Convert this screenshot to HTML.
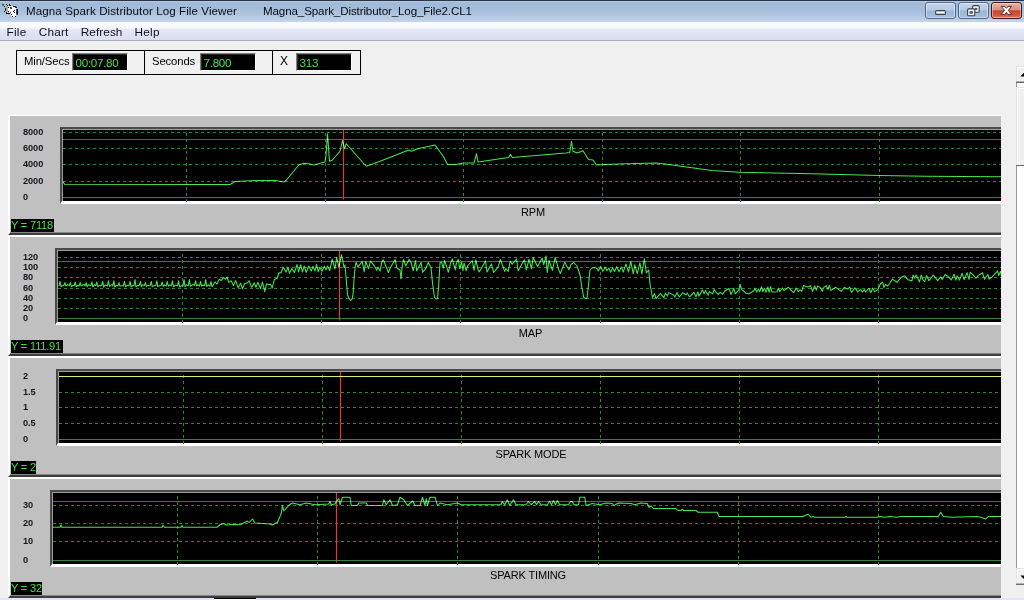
<!DOCTYPE html>
<html>
<head>
<meta charset="utf-8">
<title>Magna Spark Distributor Log File Viewer</title>
<style>
html,body{margin:0;padding:0;}
body{width:1024px;height:600px;overflow:hidden;background:#f0f0f0;font-family:"Liberation Sans",sans-serif;position:relative;}
.abs{position:absolute;}
#title{position:absolute;left:0;top:0;width:1024px;height:22px;background:linear-gradient(to bottom,#b2c6df 0px,#b2c6df 1.5px,#a1bad7 3px,#a3bcd9 9px,#b2c8e2 16px,#c2d5ea 22px);}
#title:before{content:"";position:absolute;left:0;top:0;width:100%;height:1px;background:#27344a;}
#title .t{position:absolute;top:3px;font-size:11.6px;line-height:15px;color:#0b0b12;white-space:nowrap;letter-spacing:0.08px;}
#menu{position:absolute;left:0;top:22px;width:1024px;height:18px;background:linear-gradient(to bottom,#f7f9fd 0px,#fbfcfe 3px,#f4f5fb 6px,#e3e6f4 8px,#dfe2f2 13px,#dadeef 18px);}
#menu:after{content:"";position:absolute;left:0;top:18px;width:100%;height:1px;background:#aeb0b8;}
#menu span{position:absolute;top:2.5px;font-size:11.8px;letter-spacing:0.2px;line-height:15px;color:#10101c;}
.wb svg{position:absolute;left:0;top:0;}
.wb{position:absolute;top:2px;height:15px;width:29px;overflow:hidden;border:1px solid #52688a;border-radius:3px;background:linear-gradient(to bottom,#c2d4ea 0,#b4c9e3 48%,#9ab5d6 52%,#a6bfdd 100%);box-shadow:inset 0 0 0 1px rgba(255,255,255,.45);}
.wb.close{border-color:#43161a;background:linear-gradient(to bottom,#eab2a4 0,#dd907f 45%,#c8472d 52%,#cf553c 80%,#dc7a64 100%);box-shadow:inset 0 0 0 1px rgba(255,220,210,.5);}
#info{position:absolute;left:16px;top:50px;width:343px;height:23px;border:1px solid #000;}
#info .d{position:absolute;top:0;width:1px;height:23px;background:#000;}
#info .l{position:absolute;top:4px;font-size:11.3px;letter-spacing:-0.12px;line-height:13px;color:#000;white-space:nowrap;}
#info .f{position:absolute;top:2px;width:54px;height:16px;background:#000;border:1px solid;border-color:#7c7c7c #fafafa #fafafa #7c7c7c;box-shadow:inset 1px 1px 0 #2a2a2a;}
#info .f span{position:absolute;left:2.6px;top:2px;font-size:11.6px;letter-spacing:-0.3px;line-height:13px;color:#48e048;white-space:nowrap;}
#wrap{position:absolute;left:8px;top:115px;width:993px;height:483px;overflow:hidden;}
.panel{position:absolute;left:0;width:1010px;height:121px;background:#c0c0c0;box-sizing:border-box;}
.panel:before{content:"";position:absolute;left:0;top:0;width:100%;height:121px;box-sizing:border-box;border-left:2px solid #fff;border-top:2px solid #fff;border-bottom:2px solid #3e3e3e;pointer-events:none;}
.panel:after{content:"";position:absolute;left:2px;bottom:2px;width:100%;height:1px;background:#858585;}
.chart{position:absolute;height:77px;box-sizing:border-box;background:#000;border-style:solid;border-width:2px 3px 3px 2px;border-color:#4c4c4c #fff #fff #474747;box-shadow:inset 1px 1px 0 #9a9a9a;}
.al{position:absolute;left:15px;font-size:9.2px;letter-spacing:-0.05px;line-height:13px;font-weight:bold;color:#16161a;white-space:nowrap;}
.cname{position:absolute;width:200px;text-align:center;font-size:11px;letter-spacing:-0.15px;line-height:15px;color:#000;white-space:nowrap;}
.ylab{position:absolute;left:3px;top:105px;height:13px;background:#000;color:#45e045;font-size:11px;letter-spacing:-0.17px;line-height:13px;white-space:nowrap;overflow:hidden;}
.plots{position:absolute;left:0;top:0;}
#sb{position:absolute;left:1016px;top:66px;width:8px;height:519px;background:#fff;border-left:1px solid #979797;box-sizing:border-box;}
#sb div{position:absolute;left:-1px;width:9px;background:#f0f0f0;box-sizing:border-box;border-left:1px solid #e3e3e3;border-top:1px solid #e3e3e3;box-shadow:inset 1px 1px 0 #fff;}
#sb i{position:absolute;left:-1px;width:9px;height:1px;background:#686868;}
#bot{position:absolute;left:0;top:598px;width:1024px;height:2px;background:#dfe5f3;}
#bot div{position:absolute;left:214px;top:0;width:42px;height:2px;background:#fff;border-top:1px solid #000;box-sizing:border-box;}
</style>
</head>
<body>
<div id="title">
<svg class="abs" style="left:0;top:0" width="20" height="19" viewBox="0 0 20 19">
<path d="M7.5,6 L9,5 L13,6.3 L16.3,8 L16.3,15 L15.5,17 L12,17 L10.5,14 L8,12.5 L7.3,11 Z" fill="#fff"/>
<rect x="6.2" y="6.2" width="1.5" height="5.6" fill="#9a9a9a"/>
<rect x="1.9" y="3.9" width="2.1" height="1.8" fill="#0a7a1a"/>
<rect x="6.9" y="2.1" width="1" height="1" fill="#e8a0c0"/>
<g fill="#000">
<rect x="6" y="4" width="1" height="1"/><rect x="7.2" y="5" width="1" height="1"/>
<path d="M9,4 h1 v1 h1 v1 h-2 z"/>
<rect x="4" y="6" width="1" height="1"/><rect x="8" y="7" width="1" height="1"/>
<path d="M10.2,7 h1 v.6 h.8 v1.2 h-1.8 z"/>
<path d="M13,6 h2.6 v.7 h1.4 v1.2 h-1.8 v-.9 h-2.2 z"/>
<rect x="5" y="8.2" width="1" height="2.5"/>
<rect x="4" y="11.1" width="1" height="1"/><rect x="8" y="11.1" width="1" height="1"/>
<path d="M6,12.2 h1 v.8 h3 v-.8 h1 v1 h-1 v.8 h-4 z"/>
<rect x="14" y="10" width="1" height="1"/><rect x="13" y="11" width="1" height="1"/><rect x="14" y="12" width="1" height="1"/>
<rect x="16.3" y="9" width="1.7" height="5.7"/>
<rect x="11" y="14" width="1" height="1"/><rect x="12" y="16" width="1" height="1"/><rect x="15" y="16" width="1" height="1"/>
</g></svg>
<span class="t" style="left:26px">Magna Spark Distributor Log File Viewer</span>
<span class="t" style="left:263px;letter-spacing:-0.12px">Magna_Spark_Distributor_Log_File2.CL1</span>
<div class="wb" style="left:925px"><svg width="29" height="15" viewBox="0 0 29 15"><rect x="9.6" y="7.6" width="9.8" height="3.8" rx="1" fill="#f4f2f0" stroke="#3a4252" stroke-width="1.1"/></svg></div>
<div class="wb" style="left:958px"><svg width="29" height="15" viewBox="0 0 29 15">
<rect x="13.6" y="2.6" width="6.6" height="6.6" rx="1" fill="#f6f6f6" stroke="#3a4252" stroke-width="1.1"/><rect x="16.3" y="5.3" width="1.6" height="1.4" fill="#8a94a6" stroke="#3a4252" stroke-width=".7"/>
<rect x="8.6" y="5.9" width="7.2" height="6.8" rx="1" fill="#f6f6f6" stroke="#3a4252" stroke-width="1.1"/><rect x="10.9" y="8.6" width="2.6" height="1.7" fill="#8a94a6" stroke="#3a4252" stroke-width=".8"/>
</svg></div>
<div class="wb close" style="left:991px"><svg width="29" height="15" viewBox="0 0 29 15"><path d="M9.2,3.4 h3.6 l1.6,1.9 l1.6,-1.9 h3.6 l-3.3,3.9 l3.4,4.1 h-3.7 l-1.6,-2 l-1.6,2 h-3.7 l3.4,-4.1 z" fill="#fff" stroke="#4a1c20" stroke-width=".9" stroke-linejoin="round"/></svg></div>
</div>
<div id="menu"><span style="left:6.6px">File</span><span style="left:38.7px">Chart</span><span style="left:80.8px;letter-spacing:0.05px">Refresh</span><span style="left:134.6px">Help</span></div>
<div id="info">
<div class="d" style="left:127px"></div><div class="d" style="left:255px"></div>
<span class="l" style="left:7px">Min/Secs</span><div class="f" style="left:55px"><span>00:07.80</span></div>
<span class="l" style="left:135px">Seconds</span><div class="f" style="left:183px"><span>7.800</span></div>
<span class="l" style="left:263px;font-size:12px">X</span><div class="f" style="left:279px"><span>313</span></div>
</div>
<div id="wrap">
<div class="panel" style="top:-1px">
<div class="chart" style="left:52px;top:13px;width:946px"></div>
<span class="al" style="top:12.0px">8000</span><span class="al" style="top:28.0px">6000</span><span class="al" style="top:44.0px">4000</span><span class="al" style="top:60.8px">2000</span><span class="al" style="top:77.0px">0</span>
<div class="cname" style="left:425.0px;top:90.5px">RPM</div>
<div class="ylab" style="width:43px">Y = 7118</div>
</div>
<div class="panel" style="top:120px">
<div class="chart" style="left:47px;top:13px;width:951px"></div>
<span class="al" style="top:16.0px">120</span><span class="al" style="top:26.0px">100</span><span class="al" style="top:36.0px">80</span><span class="al" style="top:46.5px">60</span><span class="al" style="top:56.7px">40</span><span class="al" style="top:67.0px">20</span><span class="al" style="top:77.2px">0</span>
<div class="cname" style="left:422.5px;top:90.5px">MAP</div>
<div class="ylab" style="width:52px">Y = 111.91</div>
</div>
<div class="panel" style="top:241px">
<div class="chart" style="left:48px;top:13px;width:950px"></div>
<span class="al" style="top:14.3px">2</span><span class="al" style="top:30.0px">1.5</span><span class="al" style="top:45.0px">1</span><span class="al" style="top:60.8px">0.5</span><span class="al" style="top:76.8px">0</span>
<div class="cname" style="left:423.0px;top:90.5px">SPARK MODE</div>
<div class="ylab" style="width:25px">Y = 2</div>
</div>
<div class="panel" style="top:362px">
<div class="chart" style="left:42px;top:13px;width:956px"></div>
<span class="al" style="top:21.8px">30</span><span class="al" style="top:40.0px">20</span><span class="al" style="top:58.0px">10</span><span class="al" style="top:77.1px">0</span>
<div class="cname" style="left:420.0px;top:90.5px">SPARK TIMING</div>
<div class="ylab" style="width:31px">Y = 32</div>
</div>
<svg class="plots" width="993" height="483" viewBox="8 115 993 483">
<g fill="none" stroke-width="1">
<path d="M63,132.5 H1006" stroke="#2d8636" stroke-dasharray="3 3"/>
<path d="M63,148.5 H1006" stroke="#2d8636" stroke-dasharray="3 3"/>
<path d="M63,164.5 H1006" stroke="#2d8636" stroke-dasharray="3 3"/>
<path d="M63,181.5 H1006" stroke="#2d8636" stroke-dasharray="3 3"/>
<path d="M186.5,133 V202" stroke="#2d8636" stroke-dasharray="3 3"/>
<path d="M325.5,133 V202" stroke="#2d8636" stroke-dasharray="3 3"/>
<path d="M463.5,133 V202" stroke="#2d8636" stroke-dasharray="3 3"/>
<path d="M602.5,133 V202" stroke="#2d8636" stroke-dasharray="3 3"/>
<path d="M740.5,133 V202" stroke="#2d8636" stroke-dasharray="3 3"/>
<path d="M879.5,133 V202" stroke="#2d8636" stroke-dasharray="3 3"/>
<path d="M63,197.5 H1006" stroke="#2f8438" stroke-width="1.2"/>
<path d="M63,139.5 H1006" stroke="#c83030" stroke-width="1.1"/>
<path d="M343.5,130 V199.5" stroke="#e83838" stroke-width="1.2"/>
<path d="M63.00,181.50 L64.50,184.30 L200.00,184.50 L230.00,184.50 L235.00,181.50 L257.50,180.50 L275.00,180.50 L283.75,182.00 L286.00,180.50 L298.75,165.00 L303.75,163.25 L308.75,163.75 L313.75,165.00 L325.00,162.00 L326.00,155.00 L327.50,133.75 L329.50,161.25 L332.50,160.00 L340.00,151.25 L342.50,140.50 L344.50,148.75 L346.25,143.75 L350.00,148.00 L355.00,153.75 L366.25,166.25 L380.00,161.25 L408.75,150.00 L411.25,151.25 L417.50,148.75 L435.00,145.00 L443.75,157.00 L447.50,164.50 L456.00,164.50 L463.50,163.00 L474.00,163.00 L476.50,153.75 L478.00,162.00 L508.50,157.50 L510.50,154.50 L512.25,157.50 L566.00,153.00 L569.75,152.50 L571.50,141.25 L573.00,151.25 L577.25,153.00 L583.00,150.75 L588.50,159.50 L593.00,160.00 L596.50,165.00 L606.00,164.50 L626.00,163.75 L656.00,163.00 L663.50,163.75 L681.00,166.25 L712.00,170.60 L739.40,172.20 L812.50,173.75 L879.60,175.60 L925.00,176.20 L1006.00,176.80" stroke="#48e84c" stroke-width="1.05" stroke-linejoin="round" style="mix-blend-mode:screen"/>
</g>
<g fill="none" stroke-width="1">
<path d="M58,257.5 H1006" stroke="#2d8636" stroke-dasharray="3 3"/>
<path d="M58,267.5 H1006" stroke="#2d8636" stroke-dasharray="3 3"/>
<path d="M58,277.5 H1006" stroke="#2d8636" stroke-dasharray="3 3"/>
<path d="M58,288.5 H1006" stroke="#2d8636" stroke-dasharray="3 3"/>
<path d="M58,298.5 H1006" stroke="#2d8636" stroke-dasharray="3 3"/>
<path d="M58,308.5 H1006" stroke="#2d8636" stroke-dasharray="3 3"/>
<path d="M182.5,254 V323" stroke="#2d8636" stroke-dasharray="3 3"/>
<path d="M321.5,254 V323" stroke="#2d8636" stroke-dasharray="3 3"/>
<path d="M460.5,254 V323" stroke="#2d8636" stroke-dasharray="3 3"/>
<path d="M600.5,254 V323" stroke="#2d8636" stroke-dasharray="3 3"/>
<path d="M739.5,254 V323" stroke="#2d8636" stroke-dasharray="3 3"/>
<path d="M878.5,254 V323" stroke="#2d8636" stroke-dasharray="3 3"/>
<path d="M58,318.5 H1006" stroke="#2f8438" stroke-width="1.2"/>
<path d="M58,261.5 H1006" stroke="#c83030" stroke-width="1.1"/>
<path d="M339.5,251 V320.5" stroke="#e83838" stroke-width="1.2"/>
<path d="M58.90,286.06 L60.00,281.43 L61.00,286.55 L62.40,285.75 L63.77,285.66 L64.87,282.59 L65.87,286.08 L67.27,284.65 L68.57,284.98 L69.28,285.57 L70.38,282.59 L71.38,286.77 L72.78,285.39 L74.16,285.84 L75.26,282.01 L76.26,286.82 L77.66,285.42 L79.05,286.08 L80.15,282.59 L81.15,286.07 L82.55,285.01 L83.85,284.46 L85.05,285.80 L86.15,282.59 L87.15,286.78 L88.55,284.74 L89.85,285.23 L90.80,285.66 L91.90,282.01 L92.90,286.77 L94.30,284.68 L95.69,285.75 L96.79,282.01 L97.79,286.74 L99.19,285.25 L100.49,285.86 L101.58,285.61 L102.68,281.43 L103.68,287.11 L105.08,284.94 L106.38,285.23 L107.36,285.75 L108.46,280.85 L109.46,286.48 L110.86,285.45 L112.16,284.33 L112.79,285.69 L113.89,280.85 L114.89,287.06 L116.29,285.28 L117.80,286.07 L118.90,282.59 L119.90,286.11 L121.30,285.70 L122.60,285.67 L123.38,285.89 L124.48,281.43 L125.48,286.83 L126.88,285.24 L128.18,285.71 L128.99,285.73 L130.09,281.43 L131.09,286.93 L132.49,285.58 L133.88,285.80 L134.98,279.69 L135.98,286.95 L137.38,285.60 L138.68,285.80 L139.30,285.42 L140.40,281.43 L141.40,286.65 L142.80,284.76 L144.34,285.55 L145.44,282.59 L146.44,286.40 L147.84,285.16 L149.14,285.85 L150.17,285.46 L151.27,281.43 L152.27,286.63 L153.67,285.84 L154.97,285.67 L155.74,285.59 L156.84,280.85 L157.84,286.58 L159.24,285.84 L161.04,285.51 L162.14,282.01 L163.14,286.25 L164.54,284.93 L166.17,285.98 L167.27,281.43 L168.27,286.26 L169.67,284.80 L171.36,285.66 L172.46,280.85 L173.46,286.79 L174.86,285.57 L176.16,285.13 L177.50,285.86 L178.60,280.85 L179.60,287.04 L181.00,285.82 L182.30,285.91 L182.94,285.96 L184.04,279.69 L185.04,286.55 L186.44,284.74 L188.29,285.68 L189.39,279.69 L190.39,286.27 L191.79,285.22 L193.09,284.40 L194.47,285.44 L195.57,280.85 L196.57,286.00 L197.97,284.74 L199.48,285.83 L200.58,281.43 L201.58,286.10 L202.98,285.13 L204.58,285.58 L205.68,279.69 L206.68,286.49 L208.08,284.77 L209.89,286.10 L210.99,281.43 L211.99,286.65 L213.39,284.72 L215.00,281.83 L217.07,284.05 L219.19,279.16 L221.33,280.54 L223.48,277.46 L225.34,279.09 L226.95,276.96 L228.89,282.35 L231.31,280.85 L233.42,285.47 L235.65,280.63 L238.18,287.59 L240.66,283.15 L242.40,288.76 L244.77,283.19 L246.84,283.31 L249.07,280.73 L251.69,287.33 L254.34,282.86 L255.96,287.24 L257.87,282.19 L260.45,288.59 L262.52,282.11 L264.79,291.62 L266.44,283.96 L268.84,284.63 L270.55,284.17 L272.16,288.10 L274.52,279.20 L277.16,278.23 L278.86,272.89 L281.07,272.77 L283.36,267.24 L286.03,272.09 L287.95,267.25 L289.48,273.30 L291.85,268.67 L294.47,272.48 L297.02,264.60 L298.55,271.83 L300.65,264.75 L302.46,272.08 L304.12,265.93 L306.17,272.27 L308.76,266.05 L311.31,271.06 L312.99,266.34 L315.02,271.00 L316.53,264.38 L318.20,271.81 L319.84,267.27 L321.96,271.29 L324.40,266.34 L325.97,269.89 L327.52,266.04 L329.70,270.59 L332.29,259.10 L334.96,269.04 L336.70,257.21 L338.84,267.47 L341.47,254.79 L344.02,267.49 L345.00,265.00 L346.50,283.00 L347.50,295.00 L349.50,299.00 L350.75,300.50 L352.00,299.00 L353.00,295.00 L354.00,280.00 L355.00,267.50 L356.00,262.27 L357.80,266.91 L362.20,261.70 L364.20,271.68 L365.70,261.53 L368.50,268.67 L370.50,261.19 L373.90,265.05 L376.70,270.23 L377.90,267.21 L380.20,270.93 L381.70,262.37 L383.20,259.69 L385.00,263.78 L388.40,272.50 L390.70,266.97 L395.10,259.48 L396.90,268.01 L400.00,270.00 L401.00,279.00 L402.00,268.00 L403.50,259.48 L405.80,265.84 L409.20,259.34 L411.20,262.90 L413.20,270.57 L415.50,260.67 L416.70,270.86 L421.10,262.40 L422.60,272.33 L426.00,268.05 L428.30,262.47 L431.00,267.50 L432.50,283.00 L434.50,297.50 L436.00,299.00 L437.50,298.75 L438.70,285.00 L440.00,262.50 L441.50,262.34 L443.30,268.05 L444.50,260.43 L446.80,266.96 L448.30,272.26 L450.60,262.94 L452.40,259.09 L455.20,269.93 L456.40,263.17 L458.20,259.18 L459.70,268.77 L461.70,261.88 L462.90,270.67 L464.10,263.28 L466.10,270.64 L467.90,265.49 L472.30,260.75 L474.10,270.35 L475.90,259.80 L477.90,269.15 L479.10,271.89 L481.10,268.76 L485.50,261.07 L487.00,271.89 L491.40,263.93 L493.70,272.50 L498.10,266.85 L500.40,259.49 L502.40,264.85 L504.70,271.41 L505.90,268.50 L508.20,271.35 L510.20,261.37 L512.20,264.15 L516.60,259.02 L518.10,270.85 L522.50,262.96 L524.50,259.83 L526.30,269.96 L529.10,259.21 L531.40,268.83 L533.20,257.45 L537.60,266.59 L539.40,263.21 L542.20,258.11 L543.70,264.79 L546.00,256.03 L547.20,272.41 L549.00,260.47 L552.40,270.34 L555.20,257.28 L558.60,269.44 L560.40,273.48 L564.80,262.17 L566.60,265.84 L568.90,269.82 L570.90,264.62 L573.75,262.50 L577.00,266.00 L580.00,275.00 L582.00,288.00 L583.75,297.50 L585.50,298.50 L587.00,298.00 L588.50,285.00 L590.00,270.00 L592.00,268.00 L595.00,267.50 L596.50,268.12 L598.19,271.01 L600.78,266.70 L602.82,271.26 L605.24,266.96 L606.97,270.82 L608.88,268.02 L610.82,272.19 L612.56,267.83 L614.56,271.46 L616.69,266.79 L619.09,271.65 L621.28,267.00 L623.38,271.92 L625.92,263.96 L628.49,271.90 L630.77,261.47 L633.29,273.80 L634.81,264.84 L637.23,273.54 L639.89,262.90 L641.86,274.01 L644.35,258.72 L646.39,272.94 L648.75,270.00 L650.00,284.00 L652.50,297.50 L654.50,293.67 L656.00,298.55 L660.40,293.43 L661.60,294.87 L663.90,297.59 L665.40,293.03 L667.40,296.07 L668.60,292.61 L673.00,294.63 L675.00,296.85 L677.00,292.65 L679.30,297.00 L682.70,292.72 L686.10,294.69 L687.30,292.98 L689.60,296.86 L694.00,292.43 L696.00,296.85 L697.80,291.92 L699.00,296.22 L702.40,289.89 L704.20,293.68 L705.40,290.58 L708.20,295.19 L709.40,291.66 L712.80,293.83 L714.00,289.59 L716.80,293.15 L718.30,294.42 L720.30,292.45 L722.60,294.15 L724.60,291.23 L729.00,288.46 L731.00,294.54 L732.20,291.90 L733.70,288.16 L735.20,293.84 L737.50,291.28 L738.70,289.80 L739.50,289.00 L740.30,284.60 L741.50,289.50 L743.00,290.50 L746.00,293.20 L749.00,293.80 L752.00,292.00 L754.00,290.50 L755.00,288.10 L756.68,292.06 L758.42,289.09 L759.71,291.85 L761.57,286.70 L762.88,291.76 L764.37,288.16 L766.11,292.19 L767.87,287.02 L769.16,292.33 L770.63,286.51 L771.79,291.99 L772.50,292.00 L777.00,291.80 L778.50,288.24 L779.70,291.67 L782.50,288.01 L784.00,290.65 L788.40,287.24 L791.80,291.17 L793.80,292.51 L796.10,288.09 L798.40,291.68 L799.90,289.77 L801.90,291.21 L803.40,285.60 L807.80,287.08 L810.60,285.73 L812.60,291.58 L814.60,285.89 L816.40,290.07 L817.60,285.91 L820.40,287.65 L822.40,291.40 L823.60,287.68 L826.40,285.60 L827.90,289.53 L829.40,285.46 L830.90,290.64 L833.20,289.15 L835.50,287.27 L838.30,289.19 L841.10,291.40 L844.50,287.44 L847.90,289.00 L849.70,287.00 L851.50,292.52 L854.90,287.73 L857.70,291.87 L860.50,289.24 L862.30,292.08 L864.30,289.58 L865.50,291.98 L868.90,288.27 L870.70,292.72 L872.70,288.08 L874.50,291.65 L877.90,289.48 L880.70,283.53 L882.70,282.19 L883.90,287.50 L885.40,284.51 L887.70,286.01 L889.70,283.31 L892.50,279.13 L896.90,282.28 L901.30,277.35 L904.70,275.77 L907.50,279.42 L911.90,280.88 L913.10,275.08 L914.60,278.28 L916.10,275.06 L919.50,281.84 L921.30,274.96 L922.80,279.75 L924.60,281.55 L926.60,275.52 L928.90,280.74 L933.30,275.03 L937.70,280.61 L940.50,276.88 L942.30,279.53 L945.10,274.48 L948.50,276.78 L951.30,279.89 L954.10,274.25 L955.90,280.11 L957.10,275.88 L959.40,280.09 L962.20,273.29 L964.20,279.82 L967.00,272.58 L969.00,279.46 L970.20,272.32 L973.00,274.56 L975.80,278.22 L978.10,275.62 L982.50,272.70 L984.50,279.17 L987.90,274.46 L989.10,279.00 L991.90,277.13 L996.30,272.48 L997.50,270.91 L998.70,275.55 L1000.50,271.40 L1002.00,278.52 L1003.80,275.31" stroke="#48e84c" stroke-width="1.05" stroke-linejoin="round" style="mix-blend-mode:screen"/>
</g>
<g fill="none" stroke-width="1">
<path d="M59,392.5 H1006" stroke="#2d8636" stroke-dasharray="3 3"/>
<path d="M59,407.5 H1006" stroke="#2d8636" stroke-dasharray="3 3"/>
<path d="M59,423.5 H1006" stroke="#2d8636" stroke-dasharray="3 3"/>
<path d="M183.5,375 V444" stroke="#2d8636" stroke-dasharray="3 3"/>
<path d="M322.5,375 V444" stroke="#2d8636" stroke-dasharray="3 3"/>
<path d="M461.5,375 V444" stroke="#2d8636" stroke-dasharray="3 3"/>
<path d="M600.5,375 V444" stroke="#2d8636" stroke-dasharray="3 3"/>
<path d="M739.5,375 V444" stroke="#2d8636" stroke-dasharray="3 3"/>
<path d="M878.5,375 V444" stroke="#2d8636" stroke-dasharray="3 3"/>
<path d="M59,439.5 H1006" stroke="#2f8438" stroke-width="1.2"/>
<path d="M59,376.5 H1006" stroke="#c83030" stroke-width="1.1"/>
<path d="M340.5,372 V441.5" stroke="#e83838" stroke-width="1.2"/>
<path d="M59.00,376.50 L1006.00,376.50" stroke="#48e84c" stroke-width="1.05" stroke-linejoin="round" style="mix-blend-mode:screen"/>
</g>
<g fill="none" stroke-width="1">
<path d="M53,505.5 H1006" stroke="#2d8636" stroke-dasharray="3 3"/>
<path d="M53,523.5 H1006" stroke="#2d8636" stroke-dasharray="3 3"/>
<path d="M53,541.5 H1006" stroke="#2d8636" stroke-dasharray="3 3"/>
<path d="M177.5,496 V565" stroke="#2d8636" stroke-dasharray="3 3"/>
<path d="M317.5,496 V565" stroke="#2d8636" stroke-dasharray="3 3"/>
<path d="M457.5,496 V565" stroke="#2d8636" stroke-dasharray="3 3"/>
<path d="M598.5,496 V565" stroke="#2d8636" stroke-dasharray="3 3"/>
<path d="M738.5,496 V565" stroke="#2d8636" stroke-dasharray="3 3"/>
<path d="M878.5,496 V565" stroke="#2d8636" stroke-dasharray="3 3"/>
<path d="M53,560.5 H1006" stroke="#2f8438" stroke-width="1.2"/>
<path d="M53,501.5 H1006" stroke="#c83030" stroke-width="1.1"/>
<path d="M336.5,493 V562.5" stroke="#e83838" stroke-width="1.2"/>
<path d="M53.00,527.25 L60.00,527.25 L61.00,525.00 L62.00,527.25 L162.00,527.25 L163.00,525.30 L164.50,527.25 L181.00,527.25 L182.00,525.50 L183.00,527.25 L217.00,527.25 L220.00,524.75 L224.00,523.50 L226.00,525.00 L234.00,524.50 L240.00,524.75 L247.50,521.00 L249.00,522.50 L252.50,519.00 L255.00,523.00 L270.00,524.00 L272.00,525.00 L277.50,522.25 L281.25,513.50 L282.50,505.50 L283.75,511.00 L288.75,505.50 L292.50,503.00 L300.00,504.75 L306.25,503.00 L315.00,504.75 L328.75,504.00 L330.00,501.50 L331.25,504.75 L335.00,504.00 L336.25,501.50 L338.75,498.50 L340.00,504.75 L342.50,497.25 L350.00,497.25 L351.25,505.50 L357.50,505.50 L358.75,503.00 L366.25,503.00 L367.50,505.50 L382.50,505.50 L383.75,499.75 L386.25,504.75 L390.00,499.75 L392.50,505.50 L397.50,504.75 L400.00,497.25 L403.75,499.75 L407.50,505.50 L412.50,501.00 L415.00,505.50 L420.00,505.50 L422.50,497.25 L425.00,505.50 L426.25,498.50 L427.50,505.50 L430.00,497.25 L435.00,497.25 L437.50,505.50 L440.00,503.00 L447.50,504.75 L457.50,503.00 L461.25,504.75 L496.00,504.75 L501.00,504.75 L502.25,501.50 L504.75,504.75 L507.25,499.75 L509.75,505.50 L513.50,499.75 L516.00,504.75 L526.00,504.75 L528.50,501.50 L531.00,504.75 L534.75,501.50 L536.50,504.75 L538.50,501.50 L541.00,504.75 L547.25,504.75 L549.75,501.00 L551.50,504.75 L553.50,500.50 L555.50,504.75 L557.25,500.50 L559.75,504.75 L568.50,504.75 L570.50,501.50 L572.25,501.50 L574.00,504.75 L578.50,504.75 L579.75,497.25 L584.75,497.25 L586.00,505.50 L592.25,503.50 L599.75,504.75 L606.00,503.00 L612.25,503.50 L614.00,505.50 L618.50,503.00 L631.00,503.50 L634.75,504.75 L641.00,503.00 L647.25,503.50 L649.00,507.25 L651.00,506.00 L653.50,508.50 L676.00,508.50 L678.00,510.50 L681.00,510.50 L682.25,509.00 L683.50,510.50 L696.00,510.50 L698.00,512.25 L717.25,512.25 L719.00,516.50 L752.00,516.50 L803.25,516.50 L805.00,515.50 L808.25,514.25 L810.75,517.25 L813.00,516.50 L815.00,517.25 L845.00,517.25 L846.00,516.30 L847.00,517.25 L877.00,517.25 L880.00,516.50 L884.00,517.20 L890.00,516.50 L897.00,517.20 L900.00,516.50 L938.25,516.50 L940.75,512.25 L943.25,516.50 L952.00,517.25 L977.00,516.50 L981.00,517.20 L985.75,519.00 L988.25,516.50 L1006.00,516.50" stroke="#48e84c" stroke-width="1.05" stroke-linejoin="round" style="mix-blend-mode:screen"/>
</g>
</svg>
</div>
<div id="sb">
<div style="top:0;height:16px"><svg class="abs" style="left:3px;top:6px" width="5" height="5"><path d="M0.3,3.4 L4,-0.3 L5,-0.3 L5,3.4 Z" fill="#000"/></svg></div><i style="top:15px;background:#b0b0b0"></i><i style="top:16px"></i>
<div style="top:21px;height:78px"></div><i style="top:99px"></i>
<div style="top:502px;height:16px"><svg class="abs" style="left:3px;top:6px" width="5" height="5"><path d="M0.3,0.4 L5,0.4 L5,4 L3.9,4 Z" fill="#000"/></svg></div><i style="top:517px;background:#b4b4b4"></i><i style="top:518px;background:#6e6e6e"></i>
</div>
<div id="bot"><div></div></div>
</body>
</html>
